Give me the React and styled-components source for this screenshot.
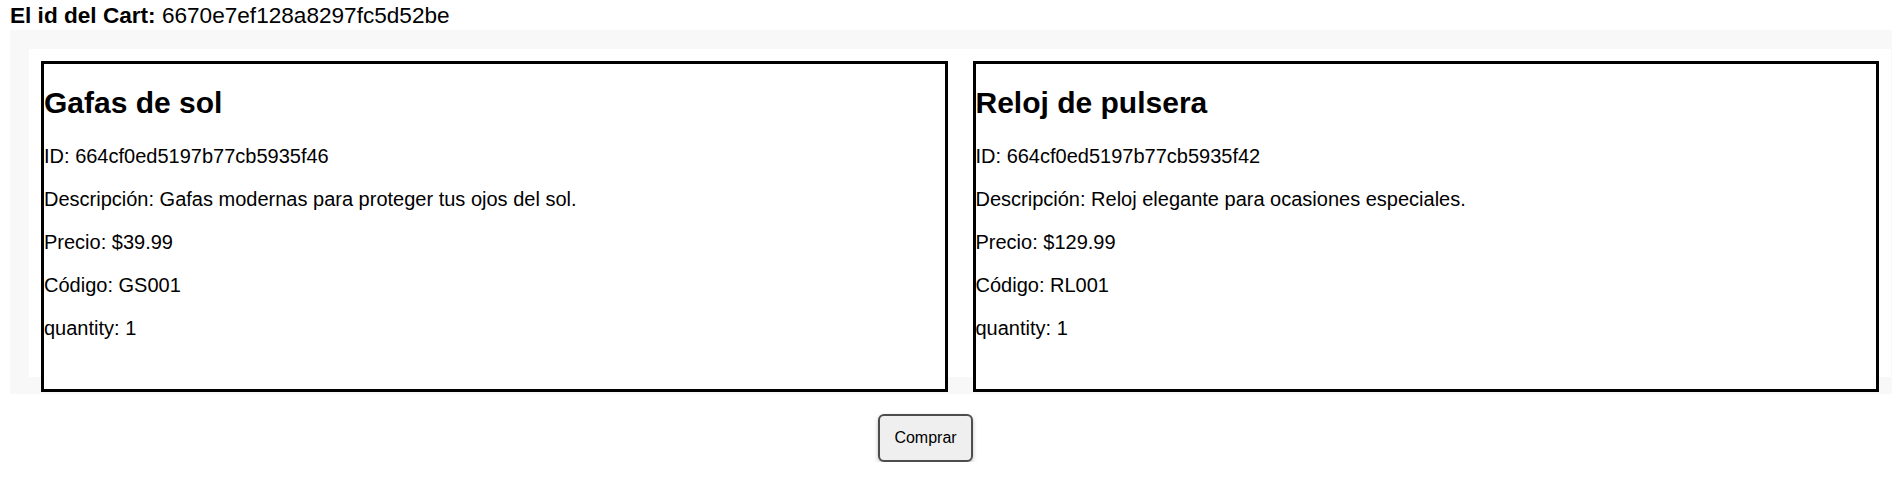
import React from "react";
import styled, { createGlobalStyle } from "styled-components";

const GlobalStyle = createGlobalStyle`
  body {
    margin: 0;
    background: #fff;
    font-family: "Liberation Sans", Arial, sans-serif;
    color: #000;
  }
`;

// titulo con el id del carrito
const CartHeader = styled.div`
  box-sizing: border-box;
  height: 30px;
  padding: 3px 0 0 10px;
  font-size: 22.6px;
  line-height: normal;
  white-space: nowrap;
`;

const Label = styled.strong`
  font-weight: bold;
`;

// fondo gris que envuelve la lista
const CartSection = styled.section`
  margin-left: 10px;
  padding: 19px 1px 17px 19px;
  background: #f8f8f8;
`;

const CartBox = styled.div`
  box-sizing: border-box;
  height: 328px;
  padding: 12px;
  background: #fff;
`;

const ProductList = styled.div`
  display: flex;
  align-items: flex-start;
  gap: 25px;
`;

const ProductCard = styled.div`
  box-sizing: border-box;
  flex: 1 1 0;
  height: 331px;
  border: 3px solid #000;
  background: #fff;
  font-size: 20px;
`;

const Title = styled.h2`
  margin: 22px 0 25px;
  font-size: 30px;
  font-weight: bold;
  line-height: normal;
`;

const Field = styled.p`
  margin: 20px 0;
  line-height: normal;
  &:first-of-type {
    margin-top: 0;
  }
`;

const Footer = styled.div`
  display: flex;
  justify-content: center;
  padding: 20px 41px 0 0;
`;

const BuyButton = styled.button`
  box-sizing: border-box;
  height: 48px;
  padding: 0 14px;
  border: 2px solid #4d4d4d;
  border-radius: 6px;
  background: #efefef;
  color: #000;
  font-family: "Liberation Sans", Arial, sans-serif;
  font-size: 16px;
  box-shadow: 0 2px 4px rgba(0, 0, 0, 0.25);
  cursor: pointer;
`;

const products = [
  {
    _id: "664cf0ed5197b77cb5935f46",
    title: "Gafas de sol",
    description: "Gafas modernas para proteger tus ojos del sol.",
    price: 39.99,
    code: "GS001",
    quantity: 1,
  },
  {
    _id: "664cf0ed5197b77cb5935f42",
    title: "Reloj de pulsera",
    description: "Reloj elegante para ocasiones especiales.",
    price: 129.99,
    code: "RL001",
    quantity: 1,
  },
];

function App() {
  return (
    <>
      <GlobalStyle />
      <CartHeader>
        <Label>El id del Cart:</Label> 6670e7ef128a8297fc5d52be
      </CartHeader>
      <CartSection>
        <CartBox>
          <ProductList>
            {products.map((p) => (
              <ProductCard key={p._id}>
                <Title>{p.title}</Title>
                <Field>ID: {p._id}</Field>
                <Field>Descripción: {p.description}</Field>
                <Field>Precio: ${p.price}</Field>
                <Field>Código: {p.code}</Field>
                <Field>quantity: {p.quantity}</Field>
              </ProductCard>
            ))}
          </ProductList>
        </CartBox>
      </CartSection>
      <Footer>
        <BuyButton>Comprar</BuyButton>
      </Footer>
    </>
  );
}

export default App;
